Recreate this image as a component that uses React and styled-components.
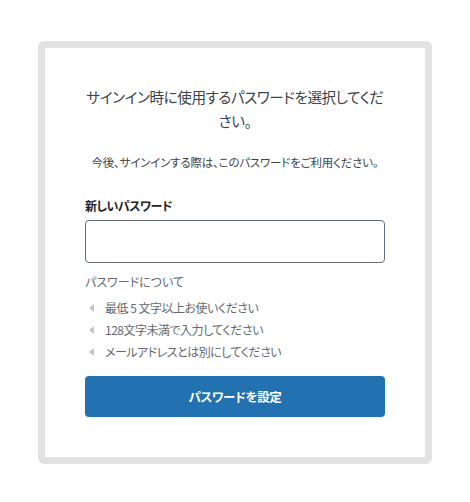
import styled, { createGlobalStyle } from 'styled-components';

const GlobalStyle = createGlobalStyle`
    body {
        margin: 0;
        background: #ffffff;
        font-family: 'Noto Sans CJK JP', 'Noto Sans', sans-serif;
        font-feature-settings: 'palt';
    }
`;

const hints = [
    '最低 5 文字以上お使いください',
    '128文字未満で入力してください',
    'メールアドレスとは別にしてください',
];

export default function App() {
    return (
        <>
            <GlobalStyle />
            <Page>
                <Card>
                    <Title>サインイン時に使用するパスワードを選択してください。</Title>
                    <Lead>今後、サインインする際は、このパスワードをご利用ください。</Lead>
                    <Field>
                        <Label htmlFor="pw">新しいパスワード</Label>
                        <Input id="pw" type="password" />
                    </Field>
                    <Rules>
                        <RulesTitle>パスワードについて</RulesTitle>
                        {hints.map((hint) => (
                            <Rule key={hint}>
                                <Arrow />
                                {hint}
                            </Rule>
                        ))}
                    </Rules>
                    <Submit type="button">パスワードを設定</Submit>
                </Card>
            </Page>
        </>
    );
}

const Page = styled.div`
    width: 470px;
    height: 502px;
    padding: 41px 0 0 38px;
    box-sizing: border-box;
`;

const Card = styled.div`
    width: 394px;
    height: 423px;
    box-sizing: border-box;
    border: 7px solid #e2e2e2;
    border-radius: 6px;
    padding: 37px 40px 0;
    display: flex;
    flex-direction: column;
`;

const Title = styled.h1`
    margin: 0;
    font-size: 14.6px;
    font-weight: 400;
    letter-spacing: -0.45px;
    line-height: 24px;
    color: #3c434a;
    text-align: center;
`;

const Lead = styled.p`
    margin: 20px 0 0;
    font-size: 11.5px;
    letter-spacing: -0.2px;
    line-height: 18px;
    color: #3c434a;
    text-align: center;
`;

const Field = styled.div`
    margin-top: 26px;
    display: flex;
    flex-direction: column;
    gap: 5px;
`;

const Label = styled.label`
    font-size: 12px;
    font-weight: 700;
    letter-spacing: -0.5px;
    line-height: 18px;
    color: #1d2327;
`;

const Input = styled.input`
    height: 43px;
    box-sizing: border-box;
    border: 1px solid #5f6b7a;
    border-radius: 4px;
    padding: 0 10px;
    font: inherit;
`;

const Rules = styled.div`
    margin-top: 10px;
    display: flex;
    flex-direction: column;
    gap: 4px;
    color: #646970;
    font-size: 12px;
    letter-spacing: -0.5px;
    line-height: 18px;
`;

const RulesTitle = styled.div`
    margin-bottom: 4px;
    letter-spacing: 0;
`;

const Rule = styled.div`
    display: flex;
    align-items: center;
    gap: 11px;
    padding-left: 4px;
`;

const Arrow = styled.span`
    width: 0;
    height: 0;
    border-top: 4px solid transparent;
    border-bottom: 4px solid transparent;
    border-right: 5px solid #c3c4c7;
`;

const Submit = styled.button`
    margin-top: 15px;
    height: 41px;
    border: none;
    border-radius: 4px;
    background: #2271b1;
    color: #ffffff;
    font: inherit;
    font-size: 12.5px;
    font-weight: 700;
    letter-spacing: -0.4px;
`;
